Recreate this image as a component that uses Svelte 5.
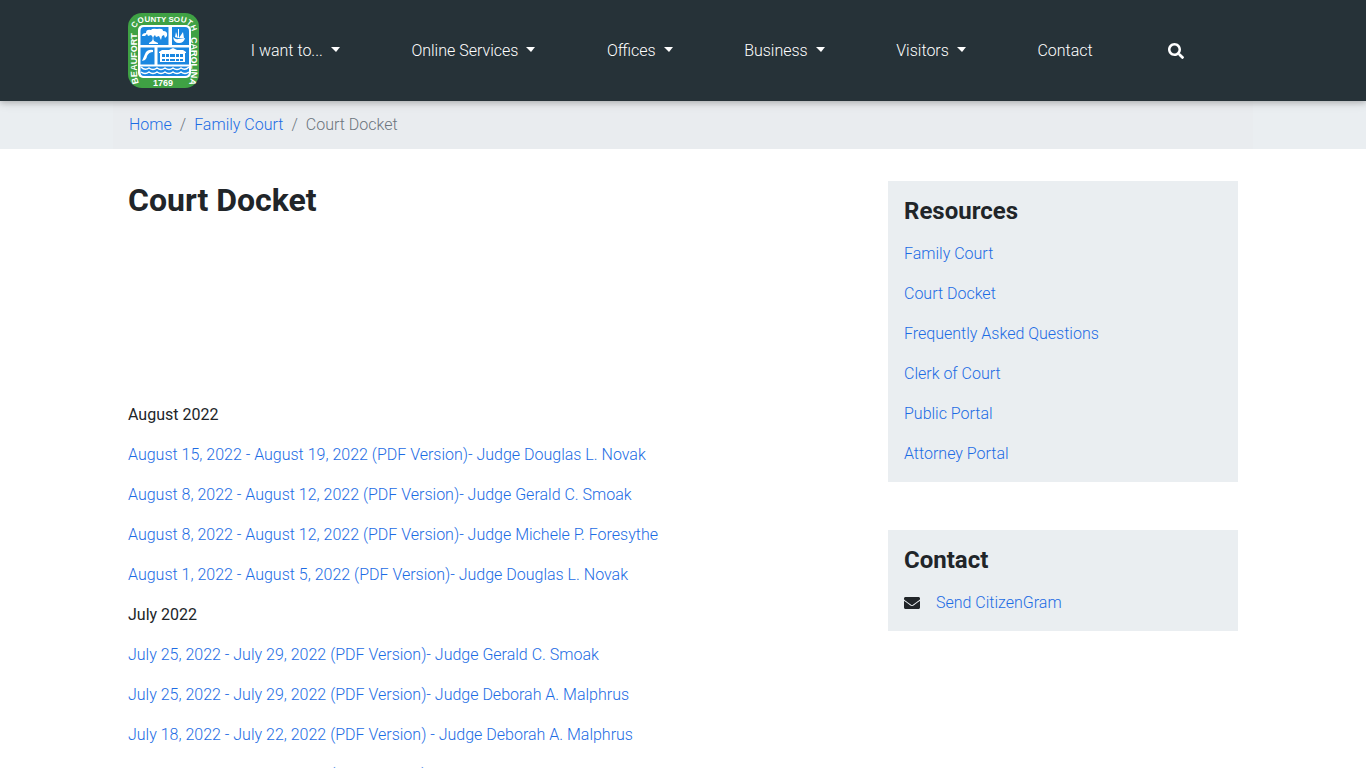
<script lang="ts">
    const menus = ['I want to...', 'Online Services', 'Offices', 'Business', 'Visitors'];

    const docket = [
        {
            month: 'August 2022',
            entries: [
                'August 15, 2022 - August 19, 2022 (PDF Version)- Judge Douglas L. Novak',
                'August 8, 2022 - August 12, 2022 (PDF Version)- Judge Gerald C. Smoak',
                'August 8, 2022 - August 12, 2022 (PDF Version)- Judge Michele P. Foresythe',
                'August 1, 2022 - August 5, 2022 (PDF Version)- Judge Douglas L. Novak'
            ]
        },
        {
            month: 'July 2022',
            entries: [
                'July 25, 2022 - July 29, 2022 (PDF Version)- Judge Gerald C. Smoak',
                'July 25, 2022 - July 29, 2022 (PDF Version)- Judge Deborah A. Malphrus',
                'July 18, 2022 - July 22, 2022 (PDF Version) - Judge Deborah A. Malphrus',
                'July 11, 2022 - July 15, 2022 (PDF Version)- Judge Gerald C. Smoak'
            ]
        }
    ];

    const resources = [
        'Family Court',
        'Court Docket',
        'Frequently Asked Questions',
        'Clerk of Court',
        'Public Portal',
        'Attorney Portal'
    ];

    let openMenu = $state<string | null>(null);

    function toggle(name: string) {
        openMenu = openMenu === name ? null : name;
    }
</script>

<div class="page">
    <header class="navbar">
        <div class="container nav-row">
            <a class="brand" href="#home" aria-label="Beaufort County South Carolina">
                <svg width="71" height="75" viewBox="0 0 71 75" aria-hidden="true">
                    <rect width="71" height="75" rx="14" fill="#3fa144" />
                    <rect x="10" y="12" width="53" height="53" rx="5" fill="#fff" />
                    <path d="M16 14h24.500v18H12.500V18q0-4 3.500-4zM44 14h13q4 0 4 4v14H44zM12.500 34.500h14v17h-14zM29.500 34.500H61v17H29.500zM12.500 53.500H61V59q0 4-4 4H16q-3.500 0-3.500-4z" fill="#1b87e0" />
                    <!-- oak -->
                    <path d="M14 23q0-3 4-3 0-4 5-3 1-2 6-1 6-1 6 2 5 0 4 5l-2 2-1-3-2 1-1 4-2-4-3 1-1-2q-3 2-1 6l4 2v1h-9v-1l3-2q2-4-1-6l-3 1-1-2-2 2z" fill="#fff" />
                    <!-- ship -->
                    <path d="M45 24q3 3 5 2l7-1q-1 5-6 5-5 0-6-6zM47 24l1-5 2 6zM51 25l4-6 1 6zM50 16h1v9h-1z" fill="#fff" />
                    <!-- indigo -->
                    <path d="M25 37q-6-1-8 4l-3 7 3-1q2-2 2-4 2-4 6-4z" fill="#fff" />
                    <!-- courthouse -->
                    <path d="M31 39l3-2h7l4-2 4 2h6l3 2v1H31zM32 40h25v9H32z" fill="#fff" />
                    <path d="M34 41h3v3h-3zM38 41h3v3h-3zM42 41h5v3h-5zM48 41h3v3h-3zM52 41h3v3h-3zM34 46h3v2h-3zM38 46h3v2h-3zM42 46h5v2h-5zM48 46h3v2h-3zM52 46h3v2h-3z" fill="#1b87e0" />
                    <path d="M13 54q4 4 8 1 4 3 8 0 4 3 8 0 4 3 8 0 4 3 8 0 4 3 8-1M13 59q4 3 8 0 4 3 8 0 4 3 8 0 4 3 8 0 4 3 8 0 4 3 8 0" fill="none" stroke="#fff" stroke-width="1.500" />
                    <path id="rim-left" d="M11 70Q9 66 9 58V16" fill="none" />
                    <path id="rim-top" d="M7 19Q7 9 20 9H50Q64 9 64 22" fill="none" />
                    <path id="rim-right" d="M63 23V60Q63 66 60 73" fill="none" />
                    <text class="seal-side"><textPath href="#rim-left">BEAUFORT</textPath></text>
                    <text class="seal-top" text-anchor="middle"><textPath href="#rim-top" startOffset="50%">COUNTY SOUTH</textPath></text>
                    <text class="seal-side"><textPath href="#rim-right" startOffset="1">CAROLINA</textPath></text>
                    <text class="seal-side" x="35" y="73" text-anchor="middle">1769</text>
                </svg>
            </a>
            <nav aria-label="Main">
                <ul class="menu">
                    {#each menus as name}
                        <li>
                            <button
                                class="nav-link dropdown"
                                type="button"
                                aria-haspopup="true"
                                aria-expanded={openMenu === name}
                                onclick={() => toggle(name)}
                            >{name}</button>
                        </li>
                    {/each}
                    <li><a class="nav-link" href="#contact">Contact</a></li>
                    <li>
                        <button class="nav-link search" type="button" aria-label="Search">
                            <svg width="16" height="16" viewBox="0 0 512 512" aria-hidden="true">
                                <path fill="currentColor" d="M505 442.7L405.300 343c-4.500-4.500-10.600-7-17-7H372c27.600-35.300 44-79.700 44-128C416 93.100 322.900 0 208 0S0 93.100 0 208s93.100 208 208 208c48.300 0 92.700-16.400 128-44v16.300c0 6.400 2.500 12.500 7 17l99.700 99.700c9.400 9.400 24.600 9.400 33.900 0l28.300-28.300c9.400-9.400 9.400-24.600.1-34zM208 336c-70.700 0-128-57.200-128-128 0-70.700 57.200-128 128-128 70.700 0 128 57.200 128 128 0 70.700-57.200 128-128 128z" />
                            </svg>
                        </button>
                    </li>
                </ul>
            </nav>
        </div>
    </header>

    <div class="crumb-bar">
        <nav class="container" aria-label="Breadcrumb">
            <ol class="breadcrumb">
                <li><a href="#home">Home</a></li>
                <li><a href="#family-court">Family Court</a></li>
                <li aria-current="page">Court Docket</li>
            </ol>
        </nav>
    </div>

    <div class="container columns">
        <main>
            <h1>Court Docket</h1>
            {#each docket as group}
                <p class="month">{group.month}</p>
                {#each group.entries as entry}
                    <p><a href="#docket">{entry}</a></p>
                {/each}
            {/each}
        </main>

        <aside>
            <section class="card">
                <h2>Resources</h2>
                {#each resources as item}
                    <p><a href="#resource">{item}</a></p>
                {/each}
            </section>

            <section class="card">
                <h2>Contact</h2>
                <p class="contact">
                    <svg width="16" height="16" viewBox="0 0 512 512" aria-hidden="true">
                        <path fill="currentColor" d="M502.300 190.800c3.900-3.100 9.700-.2 9.700 4.700V400c0 26.500-21.500 48-48 48H48c-26.500 0-48-21.500-48-48V195.600c0-5 5.700-7.800 9.700-4.700 22.400 17.400 52.100 39.500 154.100 113.600 21.100 15.400 56.700 47.800 92.200 47.600 35.700.3 72-32.800 92.300-47.600 102-74.100 131.600-96.300 154-113.700zM256 320c23.200.4 56.600-29.200 73.400-41.400 132.700-96.300 142.800-104.700 173.400-128.700 5.800-4.500 9.200-11.500 9.200-18.900v-19c0-26.500-21.500-48-48-48H48c-26.500 0-48 21.500-48 48v19c0 7.400 3.400 14.300 9.200 18.900 30.600 23.900 40.700 32.400 173.400 128.700 16.800 12.200 50.200 41.800 73.400 41.400z" />
                    </svg>
                    <a href="#citizengram">Send CitizenGram</a>
                </p>
            </section>
        </aside>
    </div>
</div>

<style>
    :global(body) {
        background: #fff;
    }
    .page {
        font-family: Roboto, sans-serif;
        font-size: 16px;
        font-weight: 300;
        line-height: 24px;
        color: #212529;
    }
    .page :global(*) {
        box-sizing: border-box;
    }
    a {
        color: #1c6ce4;
        text-decoration: none;
    }
    p {
        margin: 0 0 16px;
    }
    .container {
        max-width: 1140px;
        margin: 0 auto;
        padding: 0 15px;
    }

    .navbar {
        position: relative;
        background: #263238;
        padding: 13px 0;
        box-shadow: 0 2px 5px rgba(0, 0, 0, 0.16), 0 2px 10px rgba(0, 0, 0, 0.12);
    }
    .nav-row {
        display: flex;
        align-items: center;
        gap: 16px;
    }
    .brand svg {
        display: block;
    }
    .seal-top,
    .seal-side {
        fill: #fff;
        font-family: "Liberation Sans", sans-serif;
        font-size: 9px;
        font-weight: 700;
    }
    .seal-top {
        font-size: 8px;
    }
    .nav-row nav {
        flex: 1;
    }
    .menu {
        display: flex;
        align-items: center;
        list-style: none;
        margin: 0;
        padding: 0 14px 0 0;
    }
    .menu li {
        flex: 1 1 auto;
        text-align: center;
    }
    .nav-link {
        display: block;
        width: 100%;
        padding: 8px;
        border: 0;
        background: none;
        color: #fff;
        font: inherit;
        cursor: pointer;
    }
    .dropdown::after {
        content: "";
        display: inline-block;
        margin-left: 8px;
        vertical-align: 4px;
        border: 5px solid transparent;
        border-top-color: #fff;
        border-right-width: 4px;
        border-bottom: 0;
    }
    .search {
        padding: 8px 12px;
    }
    .search svg {
        display: block;
        margin: 0 auto;
    }

    .crumb-bar {
        background: #eaeef1;
    }
    .breadcrumb {
        display: flex;
        list-style: none;
        margin: 0 -15px;
        padding: 12px 16px;
        background: #e9ecef;
        color: #6c757d;
    }
    .breadcrumb li + li::before {
        content: "/";
        padding: 0 8px;
    }

    .columns {
        display: flex;
        gap: 30px;
        padding-top: 32px;
    }
    main {
        flex: 2;
    }
    aside {
        flex: 0 0 350px;
    }
    h1 {
        margin: 0 0 184px;
        font-size: 32px;
        font-weight: 700;
        line-height: 38px;
    }
    .month {
        font-weight: 400;
    }
    .card {
        margin-bottom: 48px;
        padding: 16px;
        background: #eaeef1;
    }
    .card p:last-child {
        margin-bottom: 0;
    }
    h2 {
        margin: 0 0 16px;
        font-size: 24px;
        font-weight: 700;
        line-height: 29px;
    }
    .contact {
        display: flex;
        align-items: center;
        gap: 16px;
    }

    @media (max-width: 900px) {
        .nav-row,
        .columns {
            flex-direction: column;
        }
        .menu {
            flex-wrap: wrap;
        }
    }
</style>
